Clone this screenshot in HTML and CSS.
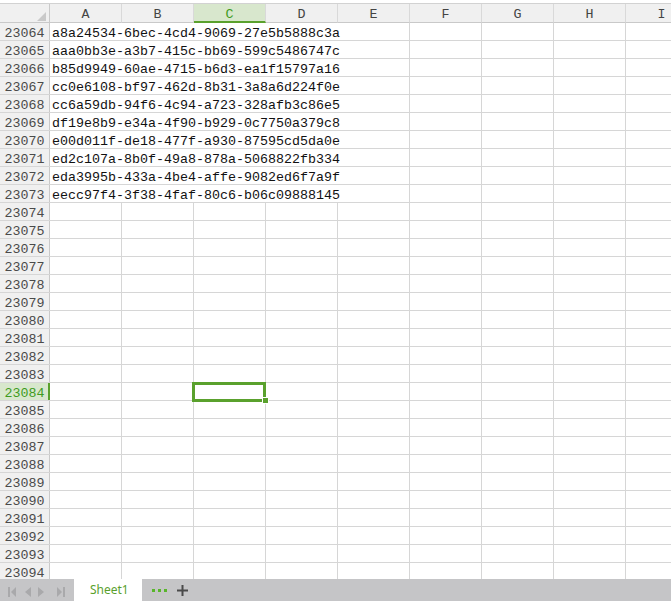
FILE: index.html
```html
<!DOCTYPE html>
<html>
<head>
<meta charset="utf-8">
<link rel="stylesheet" href="styles.css">
</head>
<body>
<div class="app">
  <div class="top"></div>
  <div class="hrow">
    <div class="corner"><svg width="9" height="9" viewBox="0 0 9 9"><polygon points="9,0 9,9 0,9" fill="#c9c9c9"/></svg></div>
    <div class="hc">A</div><div class="hc">B</div><div class="hc active">C</div><div class="hc">D</div><div class="hc">E</div><div class="hc">F</div><div class="hc">G</div><div class="hc">H</div><div class="hc">I</div>
  </div>
  <div class="sheet">
    <div class="row"><div class="rh">23064</div><div class="span">a8a24534-6bec-4cd4-9069-27e5b5888c3a</div><div class="c"></div><div class="c"></div><div class="c"></div><div class="c"></div></div>
    <div class="row"><div class="rh">23065</div><div class="span">aaa0bb3e-a3b7-415c-bb69-599c5486747c</div><div class="c"></div><div class="c"></div><div class="c"></div><div class="c"></div></div>
    <div class="row"><div class="rh">23066</div><div class="span">b85d9949-60ae-4715-b6d3-ea1f15797a16</div><div class="c"></div><div class="c"></div><div class="c"></div><div class="c"></div></div>
    <div class="row"><div class="rh">23067</div><div class="span">cc0e6108-bf97-462d-8b31-3a8a6d224f0e</div><div class="c"></div><div class="c"></div><div class="c"></div><div class="c"></div></div>
    <div class="row"><div class="rh">23068</div><div class="span">cc6a59db-94f6-4c94-a723-328afb3c86e5</div><div class="c"></div><div class="c"></div><div class="c"></div><div class="c"></div></div>
    <div class="row"><div class="rh">23069</div><div class="span">df19e8b9-e34a-4f90-b929-0c7750a379c8</div><div class="c"></div><div class="c"></div><div class="c"></div><div class="c"></div></div>
    <div class="row"><div class="rh">23070</div><div class="span">e00d011f-de18-477f-a930-87595cd5da0e</div><div class="c"></div><div class="c"></div><div class="c"></div><div class="c"></div></div>
    <div class="row"><div class="rh">23071</div><div class="span">ed2c107a-8b0f-49a8-878a-5068822fb334</div><div class="c"></div><div class="c"></div><div class="c"></div><div class="c"></div></div>
    <div class="row"><div class="rh">23072</div><div class="span">eda3995b-433a-4be4-affe-9082ed6f7a9f</div><div class="c"></div><div class="c"></div><div class="c"></div><div class="c"></div></div>
    <div class="row"><div class="rh">23073</div><div class="span">eecc97f4-3f38-4faf-80c6-b06c09888145</div><div class="c"></div><div class="c"></div><div class="c"></div><div class="c"></div></div>
    <div class="row"><div class="rh">23074</div><div class="c"></div><div class="c"></div><div class="c"></div><div class="c"></div><div class="c"></div><div class="c"></div><div class="c"></div><div class="c"></div><div class="c"></div></div>
    <div class="row"><div class="rh">23075</div><div class="c"></div><div class="c"></div><div class="c"></div><div class="c"></div><div class="c"></div><div class="c"></div><div class="c"></div><div class="c"></div><div class="c"></div></div>
    <div class="row"><div class="rh">23076</div><div class="c"></div><div class="c"></div><div class="c"></div><div class="c"></div><div class="c"></div><div class="c"></div><div class="c"></div><div class="c"></div><div class="c"></div></div>
    <div class="row"><div class="rh">23077</div><div class="c"></div><div class="c"></div><div class="c"></div><div class="c"></div><div class="c"></div><div class="c"></div><div class="c"></div><div class="c"></div><div class="c"></div></div>
    <div class="row"><div class="rh">23078</div><div class="c"></div><div class="c"></div><div class="c"></div><div class="c"></div><div class="c"></div><div class="c"></div><div class="c"></div><div class="c"></div><div class="c"></div></div>
    <div class="row"><div class="rh">23079</div><div class="c"></div><div class="c"></div><div class="c"></div><div class="c"></div><div class="c"></div><div class="c"></div><div class="c"></div><div class="c"></div><div class="c"></div></div>
    <div class="row"><div class="rh">23080</div><div class="c"></div><div class="c"></div><div class="c"></div><div class="c"></div><div class="c"></div><div class="c"></div><div class="c"></div><div class="c"></div><div class="c"></div></div>
    <div class="row"><div class="rh">23081</div><div class="c"></div><div class="c"></div><div class="c"></div><div class="c"></div><div class="c"></div><div class="c"></div><div class="c"></div><div class="c"></div><div class="c"></div></div>
    <div class="row"><div class="rh">23082</div><div class="c"></div><div class="c"></div><div class="c"></div><div class="c"></div><div class="c"></div><div class="c"></div><div class="c"></div><div class="c"></div><div class="c"></div></div>
    <div class="row"><div class="rh">23083</div><div class="c"></div><div class="c"></div><div class="c"></div><div class="c"></div><div class="c"></div><div class="c"></div><div class="c"></div><div class="c"></div><div class="c"></div></div>
    <div class="row"><div class="rh sel">23084</div><div class="c"></div><div class="c"></div><div class="c cur"><div class="selbox"><div class="handle"></div></div></div><div class="c"></div><div class="c"></div><div class="c"></div><div class="c"></div><div class="c"></div><div class="c"></div></div>
    <div class="row"><div class="rh">23085</div><div class="c"></div><div class="c"></div><div class="c"></div><div class="c"></div><div class="c"></div><div class="c"></div><div class="c"></div><div class="c"></div><div class="c"></div></div>
    <div class="row"><div class="rh">23086</div><div class="c"></div><div class="c"></div><div class="c"></div><div class="c"></div><div class="c"></div><div class="c"></div><div class="c"></div><div class="c"></div><div class="c"></div></div>
    <div class="row"><div class="rh">23087</div><div class="c"></div><div class="c"></div><div class="c"></div><div class="c"></div><div class="c"></div><div class="c"></div><div class="c"></div><div class="c"></div><div class="c"></div></div>
    <div class="row"><div class="rh">23088</div><div class="c"></div><div class="c"></div><div class="c"></div><div class="c"></div><div class="c"></div><div class="c"></div><div class="c"></div><div class="c"></div><div class="c"></div></div>
    <div class="row"><div class="rh">23089</div><div class="c"></div><div class="c"></div><div class="c"></div><div class="c"></div><div class="c"></div><div class="c"></div><div class="c"></div><div class="c"></div><div class="c"></div></div>
    <div class="row"><div class="rh">23090</div><div class="c"></div><div class="c"></div><div class="c"></div><div class="c"></div><div class="c"></div><div class="c"></div><div class="c"></div><div class="c"></div><div class="c"></div></div>
    <div class="row"><div class="rh">23091</div><div class="c"></div><div class="c"></div><div class="c"></div><div class="c"></div><div class="c"></div><div class="c"></div><div class="c"></div><div class="c"></div><div class="c"></div></div>
    <div class="row"><div class="rh">23092</div><div class="c"></div><div class="c"></div><div class="c"></div><div class="c"></div><div class="c"></div><div class="c"></div><div class="c"></div><div class="c"></div><div class="c"></div></div>
    <div class="row"><div class="rh">23093</div><div class="c"></div><div class="c"></div><div class="c"></div><div class="c"></div><div class="c"></div><div class="c"></div><div class="c"></div><div class="c"></div><div class="c"></div></div>
    <div class="row"><div class="rh">23094</div><div class="c"></div><div class="c"></div><div class="c"></div><div class="c"></div><div class="c"></div><div class="c"></div><div class="c"></div><div class="c"></div><div class="c"></div></div>
  </div>
  <div class="tabbar">
    <div class="nav">
      <svg width="74" height="22" viewBox="0 0 74 22">
        <rect x="8" y="8" width="2" height="10" fill="#a9a9ab"/>
        <polygon points="16,8 16,18 11,13" fill="#a9a9ab"/>
        <polygon points="31,8 31,18 25,13" fill="#a9a9ab"/>
        <polygon points="38,8 38,18 44,13" fill="#a9a9ab"/>
        <polygon points="57,8 57,18 62,13" fill="#a9a9ab"/>
        <rect x="63" y="8" width="2" height="10" fill="#a9a9ab"/>
      </svg>
    </div>
    <div class="tab">Sheet1</div>
    <div class="more"><span class="dot"></span><span class="dot"></span><span class="dot"></span></div>
    <div class="add"><svg width="11" height="11" viewBox="0 0 11 11"><rect x="0" y="4.5" width="11" height="2" fill="#4a4a4a"/><rect x="4.5" y="0" width="2" height="11" fill="#4a4a4a"/></svg></div>
  </div>
</div>
</body>
</html>
```

FILE: styles.css
```css
* { box-sizing: border-box; }
html, body { margin: 0; padding: 0; }
body {
  width: 671px;
  height: 601px;
  overflow: hidden;
  background: #fff;
  font-family: "Liberation Mono", "DejaVu Sans Mono", monospace;
  font-size: 13.33px;
}
.app {
  display: flex;
  flex-direction: column;
  height: 601px;
  width: 671px;
  overflow: hidden;
}
.top {
  flex: none;
  height: 4px;
  background: #fff;
  border-bottom: 1px solid #d2d2d2;
}
.hrow {
  flex: none;
  display: flex;
  height: 19px;
  background: #f0f0f0;
  white-space: nowrap;
}
.corner {
  flex: none;
  width: 50px;
  height: 19px;
  border-right: 1px solid #c9c9c9;
  border-bottom: 1px solid #c9c9c9;
  display: flex;
  justify-content: flex-end;
  align-items: flex-end;
  padding: 0 3px 1px 0;
}
.corner svg { display: block; }
.hc {
  flex: none;
  width: 72px;
  height: 19px;
  border-right: 1px solid #d9d9d9;
  border-bottom: 1px solid #c9c9c9;
  text-align: center;
  line-height: 21px;
  color: #444;
  overflow: hidden;
}
.hc.active {
  background: #d8e7cd;
  color: #3f9b1e;
  border-bottom: 2px solid #5aa12d;
}
.sheet {
  flex: 1;
  overflow: hidden;
  min-height: 0;
}
.row {
  display: flex;
  height: 18px;
  border-bottom: 1px solid #d6d6d6;
  white-space: nowrap;
}
.rh {
  flex: none;
  width: 50px;
  background: #f0f0f0;
  border-right: 1px solid #c9c9c9;
  text-align: center;
  line-height: 21px;
  color: #4a4a4a;
  overflow: hidden;
}
.rh.sel {
  background: #d8e7cd;
  color: #3f9b1e;
  border-right-color: #5aa12d;
  box-shadow: inset -1px 0 0 #5aa12d;
}
.c {
  flex: none;
  width: 72px;
  border-right: 1px solid #d6d6d6;
}
.span {
  flex: none;
  width: 360px;
  border-right: 1px solid #d6d6d6;
  padding-left: 2px;
  line-height: 21px;
  color: #111;
  overflow: hidden;
}
.cur { position: relative; }
.selbox {
  position: absolute;
  left: -2px;
  top: -1px;
  width: 74px;
  height: 20px;
  border: 3px solid #5aa12d;
  z-index: 2;
}
.handle {
  position: absolute;
  left: 67px;
  top: 12px;
  width: 7px;
  height: 7px;
  background: #5aa12d;
  border: 1px solid #fff;
}
.tabbar {
  flex: none;
  height: 22px;
  display: flex;
  background: #c5c5c7;
}
.nav {
  flex: none;
  width: 74px;
}
.nav svg { display: block; }
.tab {
  flex: none;
  width: 68px;
  background: #fff;
  color: #5a9f2c;
  font-family: "Noto Sans", "Liberation Sans", sans-serif;
  font-size: 12px;
  line-height: 22px;
  padding-left: 16px;
}
.more {
  flex: none;
  display: flex;
  align-items: center;
  gap: 3px;
  padding-left: 10px;
  padding-top: 1px;
}
.dot {
  display: block;
  width: 3px;
  height: 3px;
  background: #59b52b;
}
.add {
  flex: none;
  display: flex;
  align-items: center;
  padding-left: 10px;
}
.add svg { display: block; }
```
